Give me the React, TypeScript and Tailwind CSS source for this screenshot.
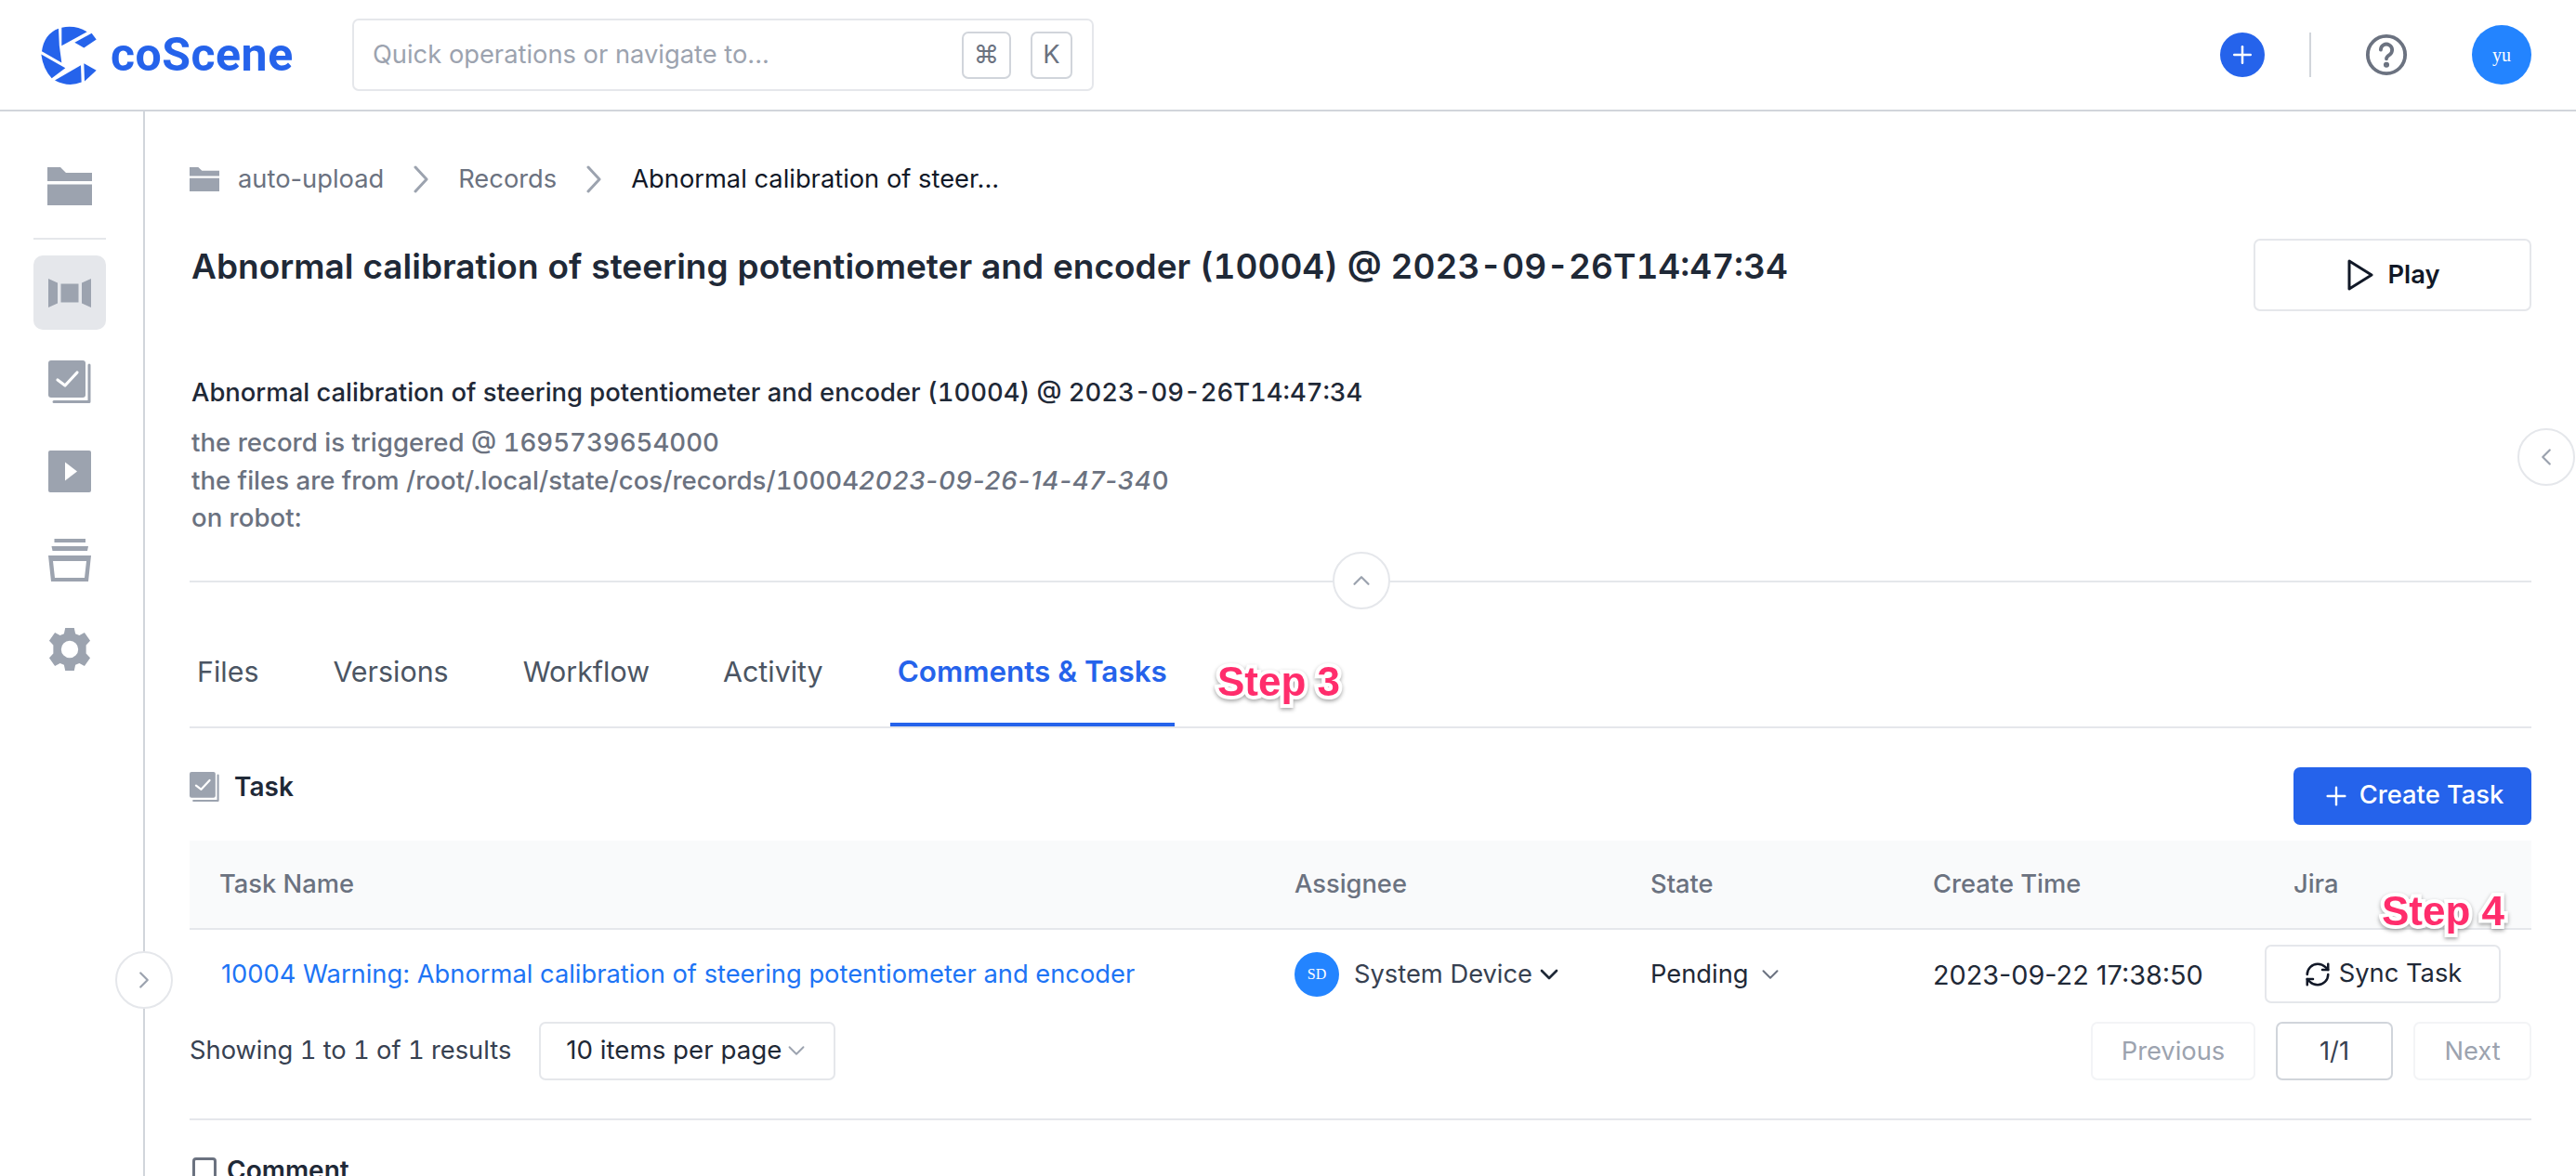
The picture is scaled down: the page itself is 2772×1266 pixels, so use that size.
import { Plus, ChevronRight, ChevronLeft, ChevronUp, ChevronDown, RefreshCw } from "lucide-react";

function Logo() {
  return (
    <svg width="65" height="71" viewBox="35 25 195 212" fill="#2563eb">
      <path d="M108 42Q150 32 190 55L108 100Z" />
      <path d="M205 60L220 80L180 107L150 90Z" />
      <path d="M98 45Q52 62 44 118L108 155Q98 100 98 45Z" />
      <path d="M42 128L120 172L76 205Q48 175 42 128Z" />
      <path d="M86 212L170 163L172 218Q130 235 86 212Z" />
      <path d="M180 157L220 180L182 215Z" />
    </svg>
  );
}

function FolderIcon({ w, h }: { w: number; h: number }) {
  return (
    <svg width={w} height={h} viewBox="0 0 48 41" preserveAspectRatio="none" fill="#9ca3af">
      <path d="M0 0H14L20 6H48V15H0Z" />
      <rect x="0" y="18.5" width="48" height="22.5" />
    </svg>
  );
}

function RecordIcon() {
  return (
    <svg width="46" height="31" viewBox="0 0 46 31" fill="#9ca3af">
      <path d="M0 0L10 4.5V26.5L0 31Z" />
      <rect x="13.5" y="5.5" width="19" height="20" />
      <path d="M46 0L36 4.5V26.5L46 31Z" />
    </svg>
  );
}

function TaskIcon({ size }: { size: number }) {
  return (
    <svg width={size} height={size} viewBox="0 0 46 46" fill="none">
      <rect x="0" y="0" width="40" height="40" rx="3" fill="#9ca3af" />
      <path d="M44 5V44.5H6" stroke="#9ca3af" strokeWidth="3" strokeLinecap="round" strokeLinejoin="round" />
      <path d="M10 21L18 27L31 13" stroke="#fff" strokeWidth="3.2" strokeLinecap="round" strokeLinejoin="round" />
    </svg>
  );
}

function PlayBoxIcon() {
  return (
    <svg width="46" height="45" viewBox="0 0 46 45">
      <rect width="46" height="45" rx="2" fill="#9ca3af" />
      <path d="M18 12.5L31 22.5L18 32.5Z" fill="#fff" />
    </svg>
  );
}

function ArchiveIcon() {
  return (
    <svg width="46" height="46" viewBox="0 0 46 46" fill="#9ca3af">
      <rect x="6.5" y="0" width="33.5" height="4" />
      <path d="M3.5 8H43L42 13H4.5Z" />
      <path fillRule="evenodd" d="M0 18H46L43 46H3ZM5 24L7 42H39L41 24Z" />
    </svg>
  );
}

function GearIcon() {
  return (
    <svg width="46" height="46" viewBox="0 0 24 24" fill="#9ca3af">
      <path
        fillRule="evenodd"
        d="M9.5 0H14.5L15.2 3.2L17.4 4.2L20.3 2.6L23.5 7.2L21.2 9.6V14.4L23.5 16.8L20.3 21.4L17.4 19.8L15.2 20.8L14.5 24H9.5L8.8 20.8L6.6 19.8L3.7 21.4L0.5 16.8L2.8 14.4V9.6L0.5 7.2L3.7 2.6L6.6 4.2L8.8 3.2ZM12 7.2A4.8 4.8 0 1 0 12 16.8A4.8 4.8 0 1 0 12 7.2Z"
      />
    </svg>
  );
}

function Crumb() {
  return (
    <svg className="mx-[31px]" width="18" height="30" viewBox="0 0 18 30" fill="none" stroke="#9ca3af" strokeWidth="3" strokeLinecap="round" strokeLinejoin="round">
      <path d="M3 2L15 15L3 28" />
    </svg>
  );
}

function CircleBtn({ className, children }: { className: string; children: React.ReactNode }) {
  return (
    <div className={`absolute w-[62px] h-[62px] rounded-full bg-white border-2 border-[#e5e7eb] flex items-center justify-center text-[#9ca3af] ${className}`}>
      {children}
    </div>
  );
}

const stepClass =
  "absolute font-['Liberation_Sans'] font-bold text-[44px] leading-none text-[#ff2d6c] [paint-order:stroke_fill] [-webkit-text-stroke:8px_#ffffff] [filter:drop-shadow(0_2px_2px_rgba(0,0,0,0.35))]";

export default function App() {
  return (
    <div className="relative h-[1266px] w-[2772px] overflow-hidden bg-white font-['Inter',sans-serif] text-[27.3px] text-[#111827]">
      <header className="flex h-[120px] items-center border-b-2 border-[#d1d5db] pl-[42px] pr-[48px]">
        <Logo />
        <span className="ml-[12px] w-[197px] font-['Roboto',sans-serif] text-[50px] font-bold leading-none tracking-[0.5px] text-[#2563eb]">coScene</span>
        <div className="ml-[63px] flex h-[78px] w-[798px] items-center rounded-[7px] border-2 border-[#e5e7eb] pl-[20px] pr-[21px]">
          <span className="flex-1 text-[#9ca3af]">Quick operations or navigate to...</span>
          <kbd className="flex h-[51px] w-[53px] items-center justify-center rounded-[7px] border-2 border-[#d1d5db] font-['Inter',sans-serif] text-[#6b7280]">⌘</kbd>
          <kbd className="ml-[21px] flex h-[51px] w-[45px] items-center justify-center rounded-[7px] border-2 border-[#d1d5db] font-['Inter',sans-serif] text-[#6b7280]">K</kbd>
        </div>
        <div className="flex-1" />
        <div className="flex h-[48px] w-[48px] items-center justify-center rounded-full bg-[#2563eb]">
          <Plus size={30} color="#fff" strokeWidth={2} />
        </div>
        <div className="ml-[48px] h-[48px] w-[2px] bg-[#d1d5db]" />
        <svg className="ml-[58px]" width="46" height="46" viewBox="0 0 24 24" fill="none" stroke="#6b7280" strokeWidth="2" strokeLinecap="round" strokeLinejoin="round">
          <circle cx="12" cy="12" r="10.5" />
          <path d="M8.8 9.2a3.2 3.2 0 1 1 5 2.7c-1.1.7-1.8 1.2-1.8 2.3" />
          <circle cx="12" cy="17.6" r="0.6" fill="#6b7280" />
        </svg>
        <div className="ml-[69px] flex h-[64px] w-[64px] items-center justify-center rounded-full bg-[#2384ff] font-['Liberation_Serif',serif] text-[20px] text-white">yu</div>
      </header>

      <div className="flex h-[1146px]">
        <aside className="flex w-[156px] shrink-0 flex-col border-r-2 border-[#d1d5db] pl-[36px] pr-[40px] pt-[40px]">
          <div className="flex h-[80px] items-center justify-center"><FolderIcon w={48} h={41} /></div>
          <div className="mb-[17px] mt-[16px] h-[2px] bg-[#e5e7eb]" />
          <div className="flex flex-col gap-[16px]">
            <div className="flex h-[80px] items-center justify-center rounded-[10px] bg-[#e5e7eb]"><RecordIcon /></div>
            <div className="flex h-[80px] items-center justify-center"><TaskIcon size={46} /></div>
            <div className="flex h-[80px] items-center justify-center"><PlayBoxIcon /></div>
            <div className="flex h-[80px] items-center justify-center"><ArchiveIcon /></div>
            <div className="flex h-[80px] items-center justify-center"><GearIcon /></div>
          </div>
        </aside>

        <main className="min-w-0 flex-1 pl-[48px] pr-[48px]">
          <nav className="mt-[55px] flex h-[36px] items-center">
            <FolderIcon w={32} h={26} />
            <span className="ml-[20px] text-[#6b7280]">auto-upload</span>
            <Crumb />
            <span className="text-[#6b7280]">Records</span>
            <Crumb />
            <span className="text-[#111827]">Abnormal calibration of steer...</span>
          </nav>

          <div className="mt-[46px] flex h-[78px] items-start justify-between">
            <h1 className="mt-[5px] pl-[2px] text-[37px] font-semibold tabular-nums leading-[50px] text-[#1f2937]">Abnormal calibration of steering potentiometer and encoder (10004) @ 2023-09-26T14:47:34</h1>
            <button className="flex h-[78px] w-[299px] items-center justify-center gap-[15px] rounded-[7px] border-2 border-[#e5e7eb] pl-[3px] font-semibold">
              <svg width="28" height="34" viewBox="0 0 28 34" fill="none" stroke="#111827" strokeWidth="3" strokeLinejoin="round"><path d="M2 2L26 17L2 32Z" /></svg>
              Play
            </button>
          </div>

          <div className="mt-[67px] pl-[2px] font-medium">
            <p className="text-[27.4px] leading-[40px] tabular-nums text-[#1f2937]">Abnormal calibration of steering potentiometer and encoder (10004) @ 2023-09-26T14:47:34</p>
            <div className="mt-[14px] text-[27.6px] leading-[40.5px] text-[#6b7280]">
              <p className="tabular-nums">the record is triggered @ 1695739654000</p>
              <p>the files are from /root/.local/state/cos/records/<span className="tabular-nums">10004</span><em className="tracking-[0.8px]">2023-09-26-14-47-34</em>0</p>
              <p>on robot:</p>
            </div>
          </div>

          <div className="mt-[47px] h-[2px] bg-[#e5e7eb]" />

          <div className="mt-[65px] flex h-[92px] items-start border-b-2 border-[#e5e7eb] text-[30.4px] leading-[44px] text-[#4b5563]">
            <span className="ml-[8px] mt-[9px]">Files</span>
            <span className="ml-[80px] mt-[9px]">Versions</span>
            <span className="ml-[80px] mt-[9px]">Workflow</span>
            <span className="ml-[79px] mt-[9px]">Activity</span>
            <span className="ml-[72px] h-[90px] border-b-4 border-[#2563eb] px-[8px] pt-[9px] text-[31.4px] font-semibold text-[#2563eb]">Comments &amp; Tasks</span>
          </div>

          <div className="mt-[42px] flex h-[64px] items-start justify-between">
            <div className="flex items-center gap-[16px]">
              <TaskIcon size={32} />
              <span className="text-[28px] font-semibold text-[#1f2937]">Task</span>
            </div>
            <button className="flex h-[62px] w-[256px] items-center justify-center gap-[9px] rounded-[7px] bg-[#2563eb] font-medium text-white">
              <Plus size={32} strokeWidth={1.8} />
              Create Task
            </button>
          </div>

          <div className="mt-[15px] grid h-[96px] grid-cols-[1157px_383px_304px_388px_288px] items-center border-b-2 border-[#e5e7eb] bg-[#f9fafb] pt-[2px] font-medium text-[#6b7280]">
            <span className="pl-[32px]">Task Name</span>
            <span className="pl-[32px]">Assignee</span>
            <span className="pl-[32px]">State</span>
            <span className="pl-[32px]">Create Time</span>
            <span className="pl-[32px]">Jira</span>
          </div>

          <div className="grid h-[96px] grid-cols-[1157px_383px_304px_388px_288px] items-center">
            <span className="pl-[34px] pt-[2px] text-[#1d74f5]">10004 Warning: Abnormal calibration of steering potentiometer and encoder</span>
            <div className="flex items-center pl-[32px] text-[#374151]">
              <span className="flex h-[48px] w-[48px] items-center justify-center rounded-full bg-[#2384ff] font-['Liberation_Serif',serif] text-[16px] text-white">SD</span>
              <span className="ml-[16px] pt-[2px]">System Device</span>
              <ChevronDown className="ml-[2px]" size={32} strokeWidth={2} color="#1f2937" />
            </div>
            <div className="flex items-center pl-[32px] text-[#1f2937]">
              <span className="pt-[2px]">Pending</span>
              <ChevronDown className="ml-[8px]" size={30} strokeWidth={1.6} color="#6b7280" />
            </div>
            <span className="pl-[32px] pt-[2px] text-[28.8px] text-[#1f2937]">2023-09-22 17:38:50</span>
            <div className="pl-[1px]">
              <button className="flex h-[63px] w-[254px] items-center justify-center gap-[8px] rounded-[7px] border-2 border-[#e5e7eb] text-[#1f2937]">
                <RefreshCw size={30} strokeWidth={2} color="#111827" />
                Sync Task
              </button>
            </div>
          </div>

          <div className="mt-[3px] flex h-[63px] items-center">
            <span className="tabular-nums text-[#374151]">Showing 1 to 1 of 1 results</span>
            <div className="ml-[30px] flex h-[63px] w-[319px] items-center rounded-[7px] border-2 border-[#e5e7eb] pl-[27px] text-[27.7px] text-[#1f2937]">
              10 items per page
              <ChevronDown className="ml-[1px]" size={30} strokeWidth={1.5} color="#9ca3af" />
            </div>
            <div className="flex-1" />
            <span className="flex h-[63px] w-[177px] items-center justify-center rounded-[7px] border-2 border-[#f3f4f6] pt-[2px] text-[#9ca3af]">Previous</span>
            <span className="ml-[22px] flex h-[63px] w-[126px] items-center justify-center rounded-[7px] border-2 border-[#d1d5db] pt-[2px] text-[#374151]">1/1</span>
            <span className="ml-[22px] flex h-[63px] w-[127px] items-center justify-center rounded-[7px] border-2 border-[#f3f4f6] pt-[2px] text-[#9ca3af]">Next</span>
          </div>

          <div className="mt-[41px] h-[2px] bg-[#e5e7eb]" />

          <div className="mt-[38px] flex items-center gap-[11px] pl-[3px]">
            <span className="h-[28px] w-[26px] rounded-[4px] border-[3px] border-[#6b7280]" />
            <span className="text-[28px] font-semibold leading-[32px] text-[#1f2937]">Comment</span>
          </div>
        </main>
      </div>

      <CircleBtn className="left-[1434px] top-[594px]"><ChevronUp size={30} strokeWidth={1.8} /></CircleBtn>
      <CircleBtn className="left-[2709px] top-[461px]"><ChevronLeft size={30} strokeWidth={1.8} /></CircleBtn>
      <CircleBtn className="left-[124px] top-[1024px]"><ChevronRight size={30} strokeWidth={1.8} /></CircleBtn>

      <span className={`${stepClass} left-[1310px] top-[712px]`}>Step 3</span>
      <span className={`${stepClass} left-[2563px] top-[959px]`}>Step 4</span>
    </div>
  );
}
